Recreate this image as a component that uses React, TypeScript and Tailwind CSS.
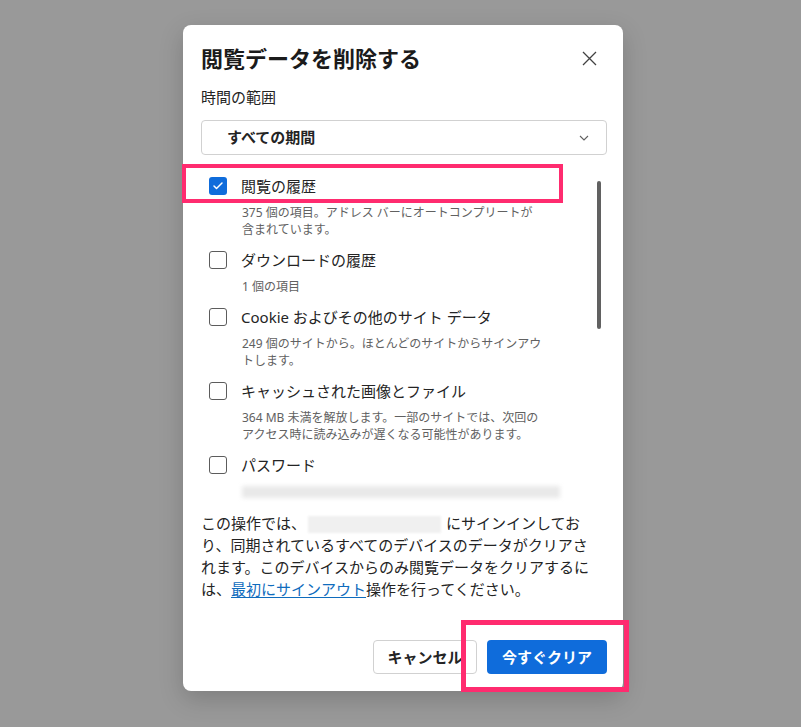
import { Check } from "lucide-react"

const items = [
  {
    label: "閲覧の履歴",
    checked: true,
    desc: ["375 個の項目。アドレス バーにオートコンプリートが", "含まれています。"],
  },
  { label: "ダウンロードの履歴", checked: false, desc: ["1 個の項目"] },
  {
    label: "Cookie およびその他のサイト データ",
    checked: false,
    desc: ["249 個のサイトから。ほとんどのサイトからサインアウ", "トします。"],
  },
  {
    label: "キャッシュされた画像とファイル",
    checked: false,
    desc: ["364 MB 未満を解放します。一部のサイトでは、次回の", "アクセス時に読み込みが遅くなる可能性があります。"],
  },
]

function Box({ checked }: { checked: boolean }) {
  if (checked) {
    return (
      <span className="flex h-[18px] w-[18px] items-center justify-center rounded-[3px] bg-[#0f6cdb]">
        <Check size={12} strokeWidth={3} className="text-white" />
      </span>
    )
  }
  return <span className="h-[18px] w-[18px] rounded-[3px] border border-[#5c5c5c] bg-white" />
}

export default function App() {
  return (
    <div className="relative h-[727px] w-[801px] overflow-hidden bg-[#999999] pl-[183px] pt-[25px] font-[family-name:'Noto_Sans','Noto_Sans_CJK_JP',sans-serif] text-[#242424]">
      <div className="flex h-[666px] w-[440px] flex-col rounded-lg bg-white pb-[17px] pl-[18px] pr-4 pt-[19px] shadow-[0_8px_24px_rgba(0,0,0,0.18)]">
        <div className="flex h-7 items-center justify-between">
          <h2 className="text-[22px] font-bold leading-7 text-[#1b1b1b]">閲覧データを削除する</h2>
          <button className="mr-[10px] flex h-4 w-4 items-center justify-center">
            <svg width="15" height="15" viewBox="0 0 15 15" fill="none" stroke="#424242" strokeWidth="1.3">
              <path d="M1 1L14 14M14 1L1 14" />
            </svg>
          </button>
        </div>

        <div className="mt-[14px] text-[15px] leading-[22px]">時間の範囲</div>

        <div className="mt-3 flex h-[35px] items-center justify-between rounded border border-[#d1d1d1] pl-[25px] pr-[17px]">
          <span className="text-[15px] font-bold">すべての期間</span>
          <svg width="10" height="6" viewBox="0 0 10 6" fill="none" stroke="#616161" strokeWidth="1.1">
            <path d="M1 1L5 5L9 1" />
          </svg>
        </div>

        <div className="mt-[10px] flex h-[337px] overflow-hidden">
          <div className="flex flex-1 flex-col gap-[10px] pl-2 pt-[9px]">
            {items.map((it) => (
              <div key={it.label}>
                <div className="flex h-6 items-center gap-[14px]">
                  <Box checked={it.checked} />
                  <span className="text-[15px]">{it.label}</span>
                </div>
                <div className="mt-[6px] whitespace-nowrap pl-[33px] text-[12px] leading-[17px] text-[#616161]">
                  {it.desc.map((d) => (
                    <div key={d}>{d}</div>
                  ))}
                </div>
              </div>
            ))}
            <div>
              <div className="flex h-6 items-center gap-[14px]">
                <Box checked={false} />
                <span className="text-[15px]">パスワード</span>
              </div>
              <div className="ml-[33px] mt-[9px] h-3 w-[318px] bg-[#e9e9e9] blur-[2px]" />
            </div>
          </div>
          <div className="ml-0 mr-[6px] mt-4 h-[148px] w-1 rounded-full bg-[#616161]" />
        </div>

        <p className="mt-[10px] whitespace-nowrap text-[15px] leading-[22px]">
          この操作では、
          <span className="ml-[2px] mr-[5px] inline-block h-[17px] w-[133px] bg-[#f0f0f0] align-middle blur-[1px]" />
          にサインインしてお
          <br />
          り、同期されているすべてのデバイスのデータがクリアさ
          <br />
          れます。このデバイスからのみ閲覧データをクリアするに
          <br />
          は、
          <a href="#" className="text-[#0f6cbd] underline underline-offset-2">
            最初にサインアウト
          </a>
          操作を行ってください。
        </p>

        <div className="mt-auto flex justify-end gap-[10px]">
          <button className="h-[34px] w-[104px] rounded border border-[#d1d1d1] bg-white text-[15px] font-bold">
            キャンセル
          </button>
          <button className="h-[34px] w-[120px] rounded bg-[#0f6cdb] text-[15px] font-bold text-white">
            今すぐクリア
          </button>
        </div>
      </div>

      <div className="absolute left-[182px] top-[164px] h-[39px] w-[381px] border-4 border-[#ff2b6f]" />
      <div className="absolute left-[461px] top-[620px] h-[72px] w-[168px] border-[5px] border-[#ff2b6f]" />
    </div>
  )
}
